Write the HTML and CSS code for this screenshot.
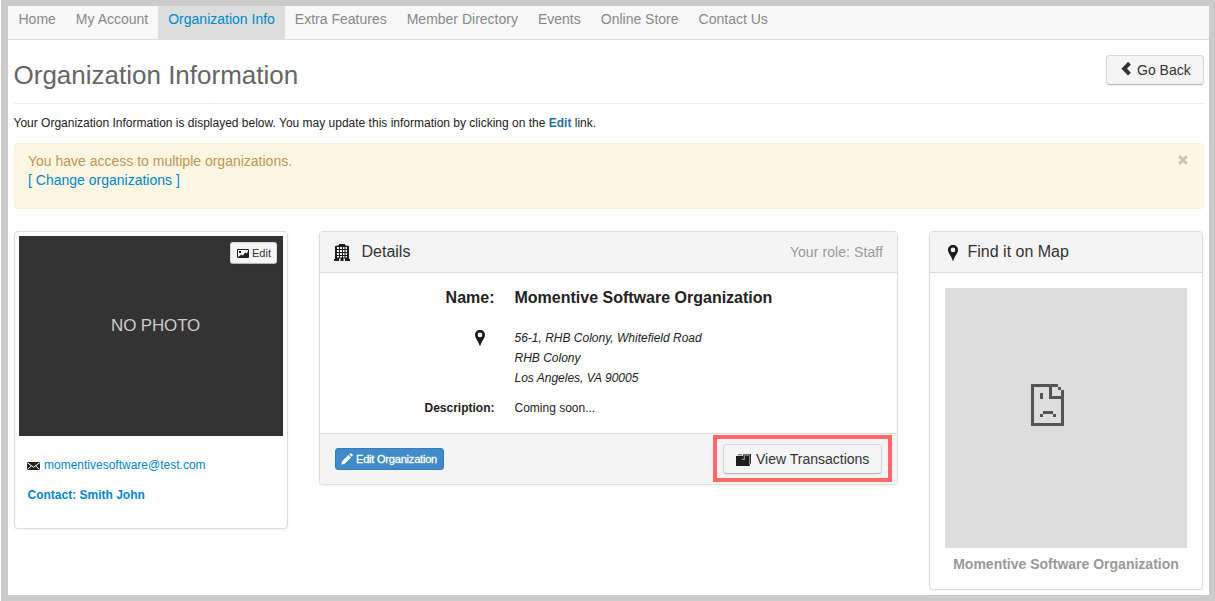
FILE: index.html
```html
<!DOCTYPE html>
<html lang="en">
<head>
<meta charset="utf-8">
<title>Organization Information</title>
<link rel="stylesheet" href="styles.css">
</head>
<body>
<div class="frame">
  <nav class="nav">
    <a>Home</a><a>My Account</a><a class="active">Organization Info</a><a>Extra Features</a><a>Member Directory</a><a>Events</a><a>Online Store</a><a>Contact Us</a>
  </nav>
  <main class="page">
    <header class="head">
      <h1>Organization Information</h1>
      <button class="btn back"><svg width="10" height="14" viewBox="0 0 10 14"><path d="M8.500 1.200 3.200 6.700 8.500 12.200" fill="none" stroke="#333" stroke-width="4"/></svg><span>Go Back</span></button>
    </header>
    <p class="intro">Your Organization Information is displayed below. You may update this information by clicking on the <a>Edit</a> link.</p>
    <div class="alert">
      <div>You have access to multiple organizations.<br><a>[ Change organizations ]</a></div>
      <svg class="close" width="10" height="10" viewBox="0 0 10 10"><path d="M1.200 1.200 8.800 8.800M8.800 1.200 1.200 8.800" stroke="#cac5b6" stroke-width="2.700"/></svg>
    </div>
    <div class="columns">
      <section class="card profile">
        <div class="photo">
          <button class="btn mini"><svg width="12" height="9" viewBox="0 0 12 9"><path d="M.5.5h11v8H.5z" fill="#fff" stroke="#222"/><path d="M1 8 4.500 5.500 6 6.500 8 3.500 9.500 4.500 11 2.500v6H1z" fill="#222"/><path d="M2 2h2v2H2z" fill="#222"/></svg><span>Edit</span></button>
          <span class="nophoto">NO PHOTO</span>
        </div>
        <div class="mail"><svg width="13" height="8" viewBox="0 0 13 8"><path d="M0 0h13v8H0z" fill="#222"/><path d="M.3.7 6.500 5.300 12.700.7M.5 7.400 4.200 4M12.500 7.400 8.800 4" fill="none" stroke="#fff" stroke-width="1"/></svg><a>momentivesoftware@test.com</a></div>
        <a class="contact">Contact: Smith John</a>
      </section>
      <section class="card details">
        <header class="bar">
          <svg width="16" height="17" viewBox="0 0 16 17"><path d="M1 2 5 1.200V0h6v1.200L15 2v13h1v2h-5v-2.500H9.500V17h-3v-2.500H5V17H0v-2h1z" fill="#1d1d1d"/><path d="M3 3h2v2H3zM6 3h2v2H6zM9 3h1.500v2H9zM11.500 3H13v2h-1.500zM3 6h2v2H3zM6 6h2v2H6zM9 6h1.500v2H9zM11.500 6H13v2h-1.500zM3 9h2v2H3zM6 9h2v2H6zM9 9h1.500v2H9zM11.500 9H13v2h-1.500zM3 12h2v1.500H3zM6 12h2v1.500H6zM9 12h1.500v1.500H9zM11.500 12H13v1.500h-1.500z" fill="#f4f4f4"/></svg>
          <h2>Details</h2><span class="role">Your role: Staff</span>
        </header>
        <div class="rows">
          <b class="name">Name:</b><b class="name value">Momentive Software Organization</b>
          <svg class="pin" width="10" height="16" viewBox="0 0 10 16"><path fill-rule="evenodd" d="M5 0C2 0 0 2.100 0 4.900 0 8 3.200 10.500 4.800 16h.4C6.800 10.500 10 8 10 4.900 10 2.100 8 0 5 0zm0 2.600a2.300 2.300 0 1 1 0 4.600 2.300 2.300 0 0 1 0-4.600z" fill="#1d1d1d"/></svg>
          <address>56-1, RHB Colony, Whitefield Road<br>RHB Colony<br>Los Angeles, VA 90005</address>
          <b class="desc">Description:</b><span class="desc">Coming soon...</span>
        </div>
        <footer class="foot">
          <button class="edit"><svg width="12" height="12" viewBox="0 0 12 12"><path d="M.3 11.700 1.200 8.300 7.400 2.100 9.900 4.600 3.700 10.800zM8.200 1.300 9.200.4q.6-.5 1.200 0l1.200 1.200q.5.6 0 1.200l-.9 1z" fill="#fff"/></svg><span>Edit Organization</span></button>
          <div class="highlight"><button class="btn view"><svg width="15" height="12" viewBox="0 0 15 12"><path d="M0 2h1.500L2 .5h4L5.500 2H7L7.500 0H15v9.500l-1.300.7V12H0z" fill="#1d1d1d"/><path d="M1 1.500h4.500M8 1h6" stroke="#eee" stroke-width=".8"/><path d="M8.300 2v3.800M5.800 5.300h2.500M13.700 2v8" fill="none" stroke="#ddd" stroke-width=".7"/></svg><span>View Transactions</span></button></div>
        </footer>
      </section>
      <section class="card location">
        <header class="bar">
          <svg width="10" height="16" viewBox="0 0 10 16"><path fill-rule="evenodd" d="M5 0C2 0 0 2.100 0 4.900 0 8 3.200 10.500 4.800 16h.4C6.800 10.500 10 8 10 4.900 10 2.100 8 0 5 0zm0 2.600a2.300 2.300 0 1 1 0 4.600 2.300 2.300 0 0 1 0-4.600z" fill="#1d1d1d"/></svg>
          <h2>Find it on Map</h2>
        </header>
        <div class="map"><svg width="33" height="42" viewBox="0 0 33 42" shape-rendering="crispEdges"><path d="M0 0h27v3H0zM0 0h3v42H0zM0 39h33v3H0zM30 6h3v36h-3zM18 0h3v15h-3zM18 12h15v3H18zM27 3h3v3h-3zM9 9h3v6H9zM12 27h10v3H12zM9 30h3v3H9zM22 30h3v3h-3z" fill="#545454"/></svg></div>
        <p class="caption">Momentive Software Organization</p>
      </section>
    </div>
  </main>
</div>
</body>
</html>
```

FILE: styles.css
```css
* { box-sizing: border-box; }
body { margin: 0; background: #fff; overflow: hidden; font-family: "Liberation Sans", Arial, sans-serif; color: #222; }
h1, h2, p { margin: 0; font-weight: 400; }
svg { display: block; flex: none; }
a { color: #0088cc; text-decoration: none; }
button { font-family: inherit; margin: 0; white-space: nowrap; }
.frame { height: 601px; margin-left: 1px; border: solid #cbcbcb; border-width: 6px 6px 6px 7px; }
.nav { display: flex; height: 34px; padding-left: .5px; background: #f8f8f8; border-bottom: 1px solid #ddd; }
.nav a { padding: 5px 10px 0; height: 33px; font-size: 14px; line-height: 17px; color: #888; }
.nav a.active { background: #ddd; color: #0088cc; }
.page { padding: 0 5px 0 6px; }
.head { display: flex; justify-content: space-between; height: 64px; padding-top: 15px; border-bottom: 1px solid #eee; }
h1 { margin-left: -.5px; font-size: 26px; line-height: 40px; color: #666; }
.btn { display: flex; align-items: center; background: #f5f5f5; border: 1px solid #d8d8d8; border-bottom-color: #b5b5b5; border-radius: 4px; color: #333; box-shadow: 0 1px 2px rgba(0,0,0,.05); }
.back { width: 98px; height: 30px; padding: 0 0 0 14px; gap: 6px; font-size: 14px; }
.back svg { margin-top: -2px; }
.intro { margin: 9px 0 0 -.5px; height: 30px; font-size: 12px; line-height: 20px; }
.intro a { font-weight: 700; color: #2a7299; }
.alert { display: flex; justify-content: space-between; height: 66px; padding: 8px 15px 0 13px; border: 1px solid #fbeed5; border-radius: 4px; background: #fcf6e3; font-size: 14px; line-height: 19px; color: #c09853; }
.close { margin-top: 3px; }
.columns { display: grid; grid-template-columns: 274px 579px 274px; gap: 31px; align-items: start; margin-top: 22px; }
.card { border: 1px solid #ddd; border-radius: 4px; box-shadow: 0 1px 3px rgba(0,0,0,.055); background: #fff; overflow: hidden; }
.profile { height: 298px; padding: 4px; }
.photo { display: flex; flex-direction: column; height: 200px; background: #333; }
.mini { align-self: flex-end; width: 47px; height: 22px; margin: 6px 6px 0 0; padding: 0 0 0 6px; gap: 3px; font-size: 11px; border-radius: 3px; }
.nophoto { margin: 51px 0 0 92px; font-size: 17px; letter-spacing: -.15px; line-height: 22px; color: #ccc; }
.mail { display: flex; align-items: center; gap: 4px; margin: 19px 0 0 8px; font-size: 12px; line-height: 20px; }
.mail svg { margin-top: 2px; }
.contact { display: block; margin: 10px 0 0 8.5px; font-size: 12px; line-height: 20px; font-weight: 700; }
.bar { display: flex; align-items: center; height: 41px; padding: 0 14px; background: #f4f4f4; border-bottom: 1px solid #ddd; }
h2 { font-size: 16px; line-height: 20px; color: #333; }
.bar svg { margin-top: 1px; }
.details h2 { margin-left: 11.5px; }
.role { margin-left: auto; font-size: 14px; letter-spacing: .08px; color: #999; }
.details { height: 254px; }
.rows { display: grid; grid-template-columns: 174.5px 1fr; column-gap: 20px; height: 160px; align-content: start; font-size: 12px; line-height: 20px; }
.rows > :nth-child(odd) { justify-self: end; }
.name { margin-top: 15px; font-size: 16px; }
.rows .pin { margin: 22px 9.5px 0 0; }
address { margin-top: 20px; }
.desc { margin-top: 10px; }
.foot { display: flex; justify-content: space-between; height: 51px; padding: 1px 5px 0 15px; background: #f4f4f4; border-top: 1px solid #ddd; }
.edit { display: flex; align-items: center; width: 109px; height: 22px; margin-top: 13px; padding: 0 0 0 5px; gap: 3px; border: 1px solid #357ebd; border-radius: 3px; background: #428bca; color: #fff; font-size: 11px; letter-spacing: -.2px; -webkit-text-stroke: .3px #fff; }
.highlight { width: 179px; height: 47px; padding: 5px 6px; border: 4px solid #ff6666; }
.view { width: 159px; height: 30px; padding: 0 0 0 12px; gap: 5px; font-size: 14px; }
.view svg { margin-top: 1px; }
.location { height: 359px; }
.location .bar { padding-left: 18px; }
.location h2 { margin-left: 9.5px; }
.map { display: grid; place-content: center; width: 242px; height: 260px; margin: 15px 0 0 15px; padding: 0 12px 26px 0; background: #ddd; }
.map svg { margin-left: -25px; }
.caption { margin-top: 6px; text-align: center; font-size: 14px; line-height: 20px; font-weight: 700; color: #999; }
```
